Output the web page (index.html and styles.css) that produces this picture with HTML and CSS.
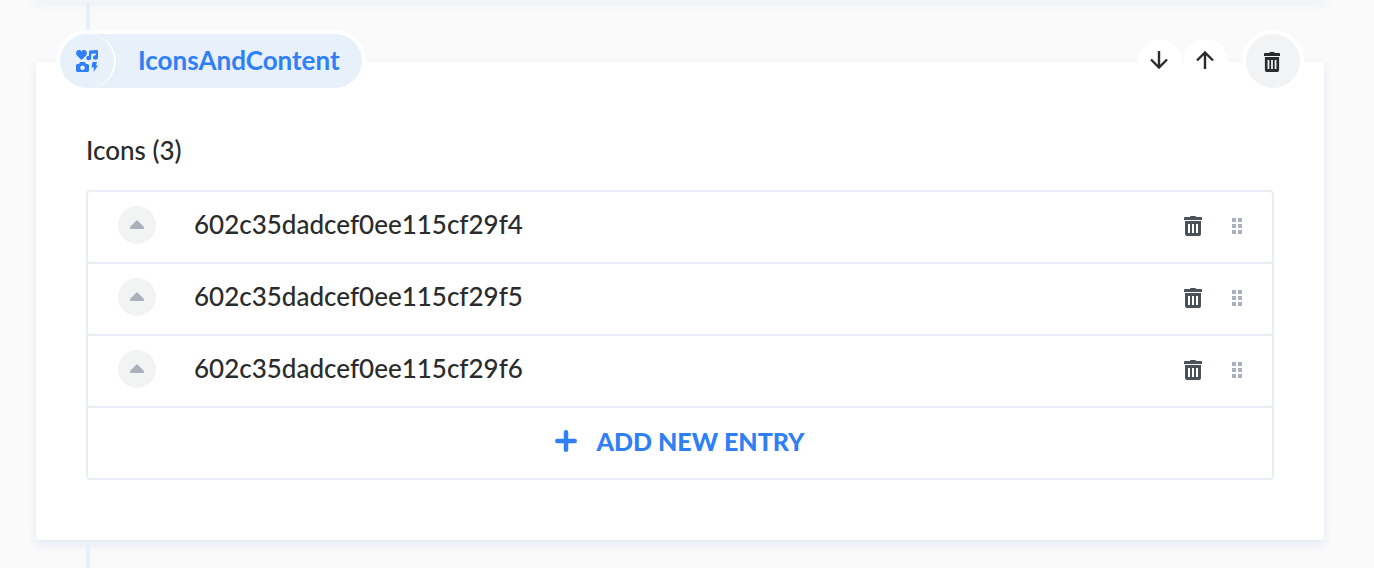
FILE: index.html
```html
<!DOCTYPE html>
<html lang="en">
<head>
<meta charset="utf-8">
<meta name="viewport" content="width=device-width, initial-scale=1">
<title>IconsAndContent</title>
<link rel="stylesheet" href="styles.css">
</head>
<body>
<svg class="defs" aria-hidden="true">
  <symbol id="trash" viewBox="0 0 18 20" preserveAspectRatio="none">
    <path fill="currentColor" d="M0 2q0-1 1-1h5q0-1 1-1h4q1 0 1 1h5q1 0 1 1v2H0z"/>
    <path fill="currentColor" fill-rule="evenodd" d="M1 5h16v13q0 2-2 2H3q-2 0-2-2zM4 8v9h2V8zm4 0v9h2V8zm4 0v9h2V8z"/>
  </symbol>
  <symbol id="grip" viewBox="0 0 10 16">
    <path fill="currentColor" d="M0 0h4v4H0zM6 0h4v4H6zM0 6h4v4H0zM6 6h4v4H6zM0 12h4v4H0zM6 12h4v4H6z"/>
  </symbol>
  <symbol id="caret" viewBox="0 0 14 9">
    <path fill="currentColor" d="M7 0l7 7v1q0 1-1 1H1q-1 0-1-1V7z"/>
  </symbol>
</svg>
<main class="page">
  <div class="previous"></div>
  <div class="connector"></div>
  <section class="card">
    <header class="head">
      <div class="pill">
        <span class="badge">
          <svg width="22" height="22" viewBox="0 0 22 22" fill="currentColor" aria-hidden="true">
            <path d="M5.500 10L.9 5.400C-.5 3.800-.1.900 1.900.2 3.400-.3 4.600.2 5.500 1.400 6.400.2 7.600-.3 9.100.2c2 .7 2.400 3.600 1 5.200z"/>
            <path d="M13 1.500q0-1 1-1l7-.5q1 0 1 1v6.500a2.500 2.300 0 1 1-2.200-2.300V3.400l-4.600.400V8a2.500 2.300 0 1 1-2.200-2.300z"/>
            <path fill-rule="evenodd" d="M4 12h5l1 2h1.500q1.500 0 1.500 1.500v5q0 1.500-1.500 1.500h-10Q0 22 0 20.500v-5Q0 14 1.500 14H3zM6.500 15.500a2.300 2.300 0 1 0 0 4.600 2.300 2.300 0 0 0 0-4.600z"/>
            <path d="M16.500 12h4.500l-1 3.500h2L17.500 22l.5-4.500h-2.500z"/>
          </svg>
        </span>
        <h1 class="title">IconsAndContent</h1>
      </div>
      <div class="actions">
        <button class="move" type="button" aria-label="Move down">
          <svg width="18" height="18" viewBox="0 0 18 18" fill="none" stroke="currentColor" stroke-width="2.400" aria-hidden="true"><path d="M9 0v17M1 8.500l8 8 8-8"/></svg>
        </button>
        <button class="move" type="button" aria-label="Move up">
          <svg width="18" height="18" viewBox="0 0 18 18" fill="none" stroke="currentColor" stroke-width="2.400" aria-hidden="true"><path d="M9 18V1M1 9.500l8-8 8 8"/></svg>
        </button>
        <button class="remove" type="button" aria-label="Delete component">
          <svg width="16" height="20"><use href="#trash"/></svg>
        </button>
      </div>
    </header>
    <div class="content">
      <h2 class="label">Icons (3)</h2>
      <div class="list">
        <div class="row">
          <button class="toggle" type="button" aria-label="Toggle entry"><svg width="14" height="9"><use href="#caret"/></svg></button>
          <span class="name">602c35dadcef0ee115cf29f4</span>
          <button class="tool" type="button" aria-label="Delete entry"><svg width="18" height="20"><use href="#trash"/></svg></button>
          <button class="tool grip" type="button" aria-label="Drag entry"><svg width="10" height="16"><use href="#grip"/></svg></button>
        </div>
        <div class="row">
          <button class="toggle" type="button" aria-label="Toggle entry"><svg width="14" height="9"><use href="#caret"/></svg></button>
          <span class="name">602c35dadcef0ee115cf29f5</span>
          <button class="tool" type="button" aria-label="Delete entry"><svg width="18" height="20"><use href="#trash"/></svg></button>
          <button class="tool grip" type="button" aria-label="Drag entry"><svg width="10" height="16"><use href="#grip"/></svg></button>
        </div>
        <div class="row">
          <button class="toggle" type="button" aria-label="Toggle entry"><svg width="14" height="9"><use href="#caret"/></svg></button>
          <span class="name">602c35dadcef0ee115cf29f6</span>
          <button class="tool" type="button" aria-label="Delete entry"><svg width="18" height="20"><use href="#trash"/></svg></button>
          <button class="tool grip" type="button" aria-label="Drag entry"><svg width="10" height="16"><use href="#grip"/></svg></button>
        </div>
        <button class="add" type="button">
          <svg width="22" height="22" viewBox="0 0 22 22" fill="none" stroke="currentColor" stroke-width="4.500" stroke-linecap="round" aria-hidden="true"><path d="M11 2.300v17.400M2.300 11h17.400"/></svg>
          <span>ADD NEW ENTRY</span>
        </button>
      </div>
    </div>
  </section>
  <div class="connector below"></div>
</main>
</body>
</html>
```
FILE: styles.css
```css
* {
  box-sizing: border-box;
}

body {
  margin: 0;
  background: #fafafb;
  color: #292b2c;
  font-family: Lato, "Open Sans", sans-serif;
  font-size: 26px;
  font-weight: 500;
  line-height: 32px;
}

button {
  display: flex;
  align-items: center;
  justify-content: center;
  margin: 0;
  padding: 0;
  border: 0;
  background: none;
  color: inherit;
  font: inherit;
  cursor: pointer;
}

svg {
  display: block;
}

.defs {
  display: none;
}

.page {
  display: flex;
  flex-direction: column;
  min-height: 100vh;
  padding: 0 50px 0 36px;
}

.previous {
  box-shadow: 0 2px 8px 2px #e6eaf5;
}

.connector {
  width: 4px;
  height: 60px;
  margin: 2px 0 0 50px;
  background: #e8f0fa;
}

.below {
  flex: 1;
  margin-top: 4px;
}

.card {
  border-radius: 4px;
  background: #fff;
  box-shadow: 0 4px 10px #e3e8f5;
}

.head {
  display: flex;
  align-items: center;
  justify-content: space-between;
  margin-top: -32px;
  padding: 0 20px;
}

.pill {
  display: flex;
  align-items: center;
  height: 62px;
  padding-right: 22px;
  border: 4px solid #fff;
  border-radius: 31px;
  background: #e8f0fa;
  color: #2f80f7;
}

.badge {
  display: flex;
  align-items: center;
  justify-content: center;
  width: 56px;
  height: 54px;
  border-right: 2px solid #fff;
  border-radius: 50%;
}

.title,
.label {
  margin: 0;
  font-size: 26px;
  line-height: 32px;
}

.title {
  margin-left: 22px;
  padding-bottom: 2px;
  font-weight: 700;
}

.label {
  font-weight: 500;
}

.actions {
  display: flex;
  align-items: center;
}

.move {
  width: 44px;
  height: 44px;
  margin-right: 2px;
  padding: 0 2px 2px 0;
  border-radius: 50%;
  background: #fff;
}

.remove {
  width: 62px;
  height: 62px;
  margin-left: 12px;
  padding: 2px 2px 0 0;
  border: 4px solid #fff;
  border-radius: 50%;
  background: #f1f3f5;
}

.content {
  padding: 42px 50px 60px;
}

.list {
  margin-top: 24px;
  border: 2px solid #e9edf5;
  border-radius: 4px;
}

.row {
  display: flex;
  align-items: center;
  height: 72px;
  padding: 0 20px 4px 30px;
  border-bottom: 2px solid #e9edf5;
}

.toggle {
  width: 38px;
  height: 38px;
  padding-bottom: 2px;
  border-radius: 50%;
  background: #f2f4f4;
  color: #aab0be;
}

.name {
  flex: 1;
  margin-left: 38px;
  padding-bottom: 2px;
}

.tool {
  width: 38px;
  height: 38px;
  padding-top: 2px;
  color: #4b515b;
}

.grip {
  width: 30px;
  margin-left: 10px;
  color: #aab0be;
}

.add {
  gap: 19px;
  width: 100%;
  height: 70px;
  padding-bottom: 4px;
  color: #2f80f7;
  font-size: 25px;
  font-weight: 900;
}
```
